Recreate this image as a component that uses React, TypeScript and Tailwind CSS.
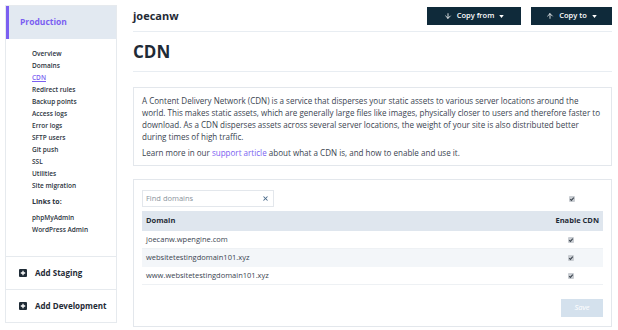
import { ArrowDown, ArrowUp, X } from 'lucide-react'

const navItems = [
  'Overview',
  'Domains',
  'CDN',
  'Redirect rules',
  'Backup points',
  'Access logs',
  'Error logs',
  'SFTP users',
  'Git push',
  'SSL',
  'Utilities',
  'Site migration',
]

const domains = [
  'joecanw.wpengine.com',
  'websitetestingdomain101.xyz',
  'www.websitetestingdomain101.xyz',
]

function Check() {
  return (
    <span className="inline-flex h-[6px] w-[6px] items-center justify-center rounded-[1px] bg-[#c9cdd2]">
      <svg viewBox="0 0 6 6" className="h-[6px] w-[6px]">
        <path d="M1.2 3.2 L2.4 4.4 L4.8 1.6" fill="none" stroke="#3d4650" strokeWidth="1.1" />
      </svg>
    </span>
  )
}

function PlusBox() {
  return (
    <span className="flex h-[8px] w-[8px] items-center justify-center rounded-[1px] bg-[#1f2b36]">
      <svg viewBox="0 0 8 8" className="h-[8px] w-[8px]">
        <path d="M4 1.8 V6.2 M1.8 4 H6.2" stroke="white" strokeWidth="1.3" />
      </svg>
    </span>
  )
}

function Caret() {
  return (
    <svg viewBox="0 0 6 4" className="h-[3px] w-[5px]">
      <path d="M0 0 H6 L3 4 Z" fill="white" />
    </svg>
  )
}

export default function App() {
  return (
    <div
      className="flex h-[330px] w-[618px] gap-[16px] bg-white pl-[5px] pt-[5px] text-[#1f2b36]"
      style={{ fontFamily: '"Open Sans", sans-serif' }}
    >
      {/* Sidebar */}
      <div className="flex h-[318px] w-[112px] flex-col border border-[#e6eaee] bg-white">
        <div className="flex h-[33px] items-center border-l-[3px] border-[#7b5ff1] bg-[#e2e9f1] pl-[11px] text-[8.5px] font-bold text-[#7b5ff1]">
          Production
        </div>
        <div className="flex flex-col pl-[26px] pt-[9px]">
          {navItems.map((item) => (
            <div
              key={item}
              className={
                item === 'CDN'
                  ? 'h-[12px] text-[6.5px] leading-[12px] font-semibold text-[#7b5ff1] underline'
                  : 'h-[12px] text-[6.5px] leading-[12px] font-semibold text-[#2c3440]'
              }
            >
              {item}
            </div>
          ))}
          <div className="mt-[3px] h-[14px] text-[7px] leading-[14px] font-bold text-[#2c3440]">Links to:</div>
          <div className="mt-[3px] h-[12px] text-[6.5px] leading-[12px] font-semibold text-[#2c3440]">phpMyAdmin</div>
          <div className="h-[12px] text-[6.5px] leading-[12px] font-semibold text-[#2c3440]">WordPress Admin</div>
        </div>
        <div className="mt-[20px] flex h-[33px] items-center gap-[8px] border-t border-[#e6eaee] pl-[13px] text-[8px] font-bold">
          <PlusBox />
          Add Staging
        </div>
        <div className="flex h-[33px] items-center gap-[8px] border-t border-[#e6eaee] pl-[13px] text-[8px] font-bold">
          <PlusBox />
          Add Development
        </div>
      </div>

      {/* Main */}
      <div className="flex w-[479px] flex-col">
        <div className="flex h-[27px] items-center justify-between border-b border-[#e8edf2] pb-[4px]">
          <div className="text-[11px] font-bold text-[#1f2b36]">joecanw</div>
          <div className="flex gap-[10px]">
            <button className="flex h-[18px] w-[94px] items-center justify-center gap-[5px] bg-[#0f2a3a] text-[7.5px] font-semibold text-white">
              <ArrowDown className="h-[8px] w-[8px]" strokeWidth={2.5} />
              Copy from
              <Caret />
            </button>
            <button className="flex h-[18px] w-[81px] items-center justify-center gap-[5px] bg-[#0f2a3a] text-[7.5px] font-semibold text-white">
              <ArrowUp className="h-[8px] w-[8px]" strokeWidth={2.5} />
              Copy to
              <Caret />
            </button>
          </div>
        </div>
        <div className="flex h-[40px] items-center border-b border-[#e8edf2] text-[17px] font-bold text-[#1f2b36]">
          CDN
        </div>

        <div className="mt-[15px] border border-[#e3e7ec] px-[8px] pb-[6px] pt-[7px] text-[8.05px] leading-[12px] whitespace-nowrap text-[#3a4450]">
          <p>
            A Content Delivery Network (CDN) is a service that disperses your static assets to various server locations around the
            <br />
            world. This makes static assets, which are generally large files like images, physically closer to users and therefore faster to
            <br />
            download. As a CDN disperses assets across several server locations, the weight of your site is also distributed better
            <br />
            during times of high traffic.
          </p>
          <p className="mt-[4px]">
            Learn more in our <span className="text-[#7b5ff1]">support article</span> about what a CDN is, and how to enable and use it.
          </p>
        </div>

        <div className="mt-[13px] flex h-[148px] flex-col border border-[#e3e7ec] px-[8px] pt-[10px]">
          <div className="flex h-[17px] items-center justify-between">
            <div className="flex h-[17px] w-[132px] items-center justify-between border border-[#e3e7ec] px-[3px] text-[7.5px] text-[#8a939c]">
              Find domains
              <X className="mr-[1px] h-[7px] w-[7px] text-[#4a6a8a]" strokeWidth={3.5} />
            </div>
            <div className="mr-[28px] flex">
              <Check />
            </div>
          </div>
          <div className="mt-[4px] flex h-[20px] items-center justify-between bg-[#dfe6ee] px-[4px] text-[7.5px] font-bold text-[#1f2b36]">
            <span>Domain</span>
            <span>Enable CDN</span>
          </div>
          {domains.map((d, i) => (
            <div
              key={d}
              className={
                i === 1
                  ? 'flex h-[18px] items-center justify-between bg-[#f3f6f9] px-[4px] text-[7.5px] text-[#3a4450]'
                  : 'flex h-[18px] items-center justify-between border-b border-[#eef1f4] bg-white px-[4px] text-[7.5px] text-[#3a4450]'
              }
            >
              <span>{d}</span>
              <span className="mr-[25px] flex">
                <Check />
              </span>
            </div>
          ))}
          <div className="mt-[14px] flex justify-end">
            <button className="h-[18px] w-[42px] bg-[#d4e1ed] text-[7.5px] italic text-white">Save</button>
          </div>
        </div>
      </div>
    </div>
  )
}
